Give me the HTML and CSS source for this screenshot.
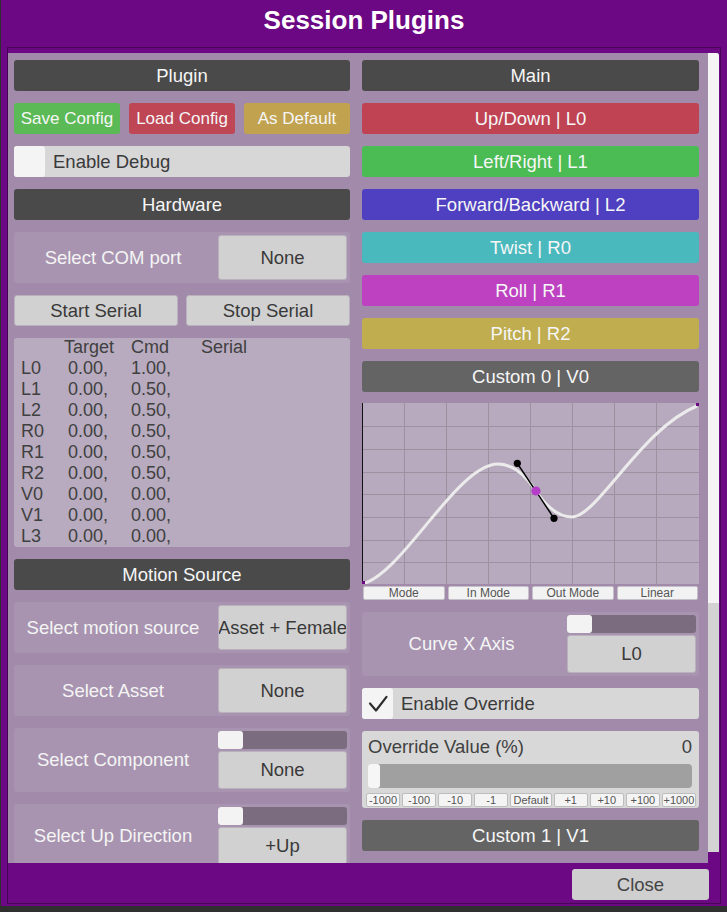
FILE: index.html
```html
<!DOCTYPE html>
<html>
<head>
<meta charset="utf-8">
<title>Session Plugins</title>
<link rel="stylesheet" href="styles.css">
</head>
<body>
<div class="window">
  <div class="title">Session Plugins</div>
  <div class="frame">
    <div class="view">
      <div class="scroll">
        <div class="col left">
          <div class="hdr">Plugin</div>
          <div class="btnrow">
            <div class="cbtn green">Save Config</div>
            <div class="cbtn red">Load Config</div>
            <div class="cbtn gold">As Default</div>
          </div>
          <div class="toggle"><span class="box"></span><span class="tlabel">Enable Debug</span></div>
          <div class="hdr">Hardware</div>
          <div class="row">
            <div class="lbl">Select COM port</div>
            <div class="ctl"><div class="gbtn">None</div></div>
          </div>
          <div class="btnrow two">
            <div class="gbtn">Start Serial</div>
            <div class="gbtn">Stop Serial</div>
          </div>
          <div class="data">
            <div class="grid">
              <span></span><span class="shift">Target</span><span>Cmd</span><span>Serial</span>
              <span>L0</span><span>0.00,</span><span>1.00,</span><span></span>
              <span>L1</span><span>0.00,</span><span>0.50,</span><span></span>
              <span>L2</span><span>0.00,</span><span>0.50,</span><span></span>
              <span>R0</span><span>0.00,</span><span>0.50,</span><span></span>
              <span>R1</span><span>0.00,</span><span>0.50,</span><span></span>
              <span>R2</span><span>0.00,</span><span>0.50,</span><span></span>
              <span>V0</span><span>0.00,</span><span>0.00,</span><span></span>
              <span>V1</span><span>0.00,</span><span>0.00,</span><span></span>
              <span>L3</span><span>0.00,</span><span>0.00,</span><span></span>
            </div>
          </div>
          <div class="hdr">Motion Source</div>
          <div class="row">
            <div class="lbl">Select motion source</div>
            <div class="ctl"><div class="gbtn clip"><span>Asset + Female</span></div></div>
          </div>
          <div class="row">
            <div class="lbl">Select Asset</div>
            <div class="ctl"><div class="gbtn">None</div></div>
          </div>
          <div class="row tall">
            <div class="lbl">Select Component</div>
            <div class="ctl">
              <div class="slider"><div class="thumb"></div></div>
              <div class="gbtn">None</div>
            </div>
          </div>
          <div class="row tall">
            <div class="lbl">Select Up Direction</div>
            <div class="ctl">
              <div class="slider"><div class="thumb"></div></div>
              <div class="gbtn">+Up</div>
            </div>
          </div>
        </div>

        <div class="col right">
          <div class="hdr">Main</div>
          <div class="axis red">Up/Down | L0</div>
          <div class="axis green2">Left/Right | L1</div>
          <div class="axis blue">Forward/Backward | L2</div>
          <div class="axis teal">Twist | R0</div>
          <div class="axis magenta">Roll | R1</div>
          <div class="axis gold2">Pitch | R2</div>
          <div class="axis grey">Custom 0 | V0</div>
          <div class="graph">
            <div class="plot">
              <svg width="337" height="181" viewBox="0 0 337 181">
                <g stroke="#9d919f" stroke-width="1">
                  <line x1="42.5" y1="0" x2="42.5" y2="181"/>
                  <line x1="84.5" y1="0" x2="84.5" y2="181"/>
                  <line x1="126.5" y1="0" x2="126.5" y2="181"/>
                  <line x1="168.5" y1="0" x2="168.5" y2="181"/>
                  <line x1="210.5" y1="0" x2="210.5" y2="181"/>
                  <line x1="252.5" y1="0" x2="252.5" y2="181"/>
                  <line x1="294.5" y1="0" x2="294.5" y2="181"/>
                  <line x1="0" y1="23.5" x2="337" y2="23.5"/>
                  <line x1="0" y1="46.5" x2="337" y2="46.5"/>
                  <line x1="0" y1="69.5" x2="337" y2="69.5"/>
                  <line x1="0" y1="91.5" x2="337" y2="91.5"/>
                  <line x1="0" y1="114.5" x2="337" y2="114.5"/>
                  <line x1="0" y1="137.5" x2="337" y2="137.5"/>
                  <line x1="0" y1="159.5" x2="337" y2="159.5"/>
                </g>
                <line x1="0.5" y1="0" x2="0.5" y2="181" stroke="#111" stroke-width="1"/>
                <path d="M0,181 C40,172 95,61 136,61 C150,61 162,70 174,88 C186,106 197,114 210,114 C235,114 280,25 335,3" fill="none" stroke="#ebebeb" stroke-width="3"/>
                <line x1="155.3" y1="60.3" x2="192" y2="115.3" stroke="#000" stroke-width="1.5"/>
                <circle cx="155.3" cy="60.3" r="3.6" fill="#000"/>
                <circle cx="192" cy="115.3" r="3.6" fill="#000"/>
                <circle cx="174" cy="88" r="4.6" fill="#b43ec8"/>
                <rect x="0" y="178" width="3" height="3" fill="#6c0883"/>
                <rect x="334" y="0" width="3" height="3" fill="#6c0883"/>
              </svg>
            </div>
            <div class="gbtns">
              <div class="gb">Mode</div>
              <div class="gb">In Mode</div>
              <div class="gb">Out Mode</div>
              <div class="gb">Linear</div>
            </div>
          </div>
          <div class="row tall">
            <div class="lbl">Curve X Axis</div>
            <div class="ctl">
              <div class="slider"><div class="thumb"></div></div>
              <div class="gbtn">L0</div>
            </div>
          </div>
          <div class="toggle">
            <span class="box">
              <svg width="31" height="31" viewBox="0 0 31 31"><polyline points="8,15.5 14,22.5 24.5,8.8" fill="none" stroke="#2c2c2c" stroke-width="2.2" stroke-linecap="round" stroke-linejoin="round"/></svg>
            </span>
            <span class="tlabel">Enable Override</span>
          </div>
          <div class="ovr">
            <div class="ovr-top"><span>Override Value (%)</span><span>0</span></div>
            <div class="otrack"><div class="othumb"></div></div>
            <div class="obtns">
              <div class="ob">-1000</div>
              <div class="ob">-100</div>
              <div class="ob">-10</div>
              <div class="ob">-1</div>
              <div class="ob wide">Default</div>
              <div class="ob">+1</div>
              <div class="ob">+10</div>
              <div class="ob">+100</div>
              <div class="ob">+1000</div>
            </div>
          </div>
          <div class="axis grey">Custom 1 | V1</div>
          <div class="axis grey"></div>
        </div>
      </div>
      <div class="scrollbar"><div class="sthumb"></div></div>
    </div>
    <div class="footer"><div class="close">Close</div></div>
  </div>
</div>
</body>
</html>
```

FILE: styles.css
```css
* { box-sizing: border-box; margin: 0; padding: 0; }
html, body { width: 727px; height: 912px; overflow: hidden; }
body {
  background: #2f2f2f;
  font-family: "Liberation Sans", Arial, sans-serif;
  font-size: 18.5px;
}
.window {
  width: 726px;
  height: 906px;
  margin-left: 1px;
  background: #6c0883;
  display: flex;
  flex-direction: column;
}
.title {
  height: 47px;
  line-height: 40px;
  text-align: center;
  color: #fff;
  font-weight: bold;
  font-size: 26px;
}
.frame {
  margin-left: 6px;
  width: 714px;
  height: 857px;
  border: 1px solid #440655;
  padding-top: 5px;
  display: flex;
  flex-direction: column;
}
.view {
  height: 810px;
  display: flex;
}
.scroll {
  width: 700px;
  height: 810px;
  overflow: hidden;
  background: #a18aaa;
  padding: 7px 9px 0 6px;
  display: flex;
  gap: 12px;
  align-items: flex-start;
}
.scrollbar {
  width: 11px;
  height: 799px;
  background: #d3d3d3;
  border-radius: 0 3px 0 0;
}
.sthumb {
  height: 550px;
  background: #f4f4f4;
  border-radius: 0 3px 0 0;
}
.footer {
  flex: 1;
  display: flex;
  justify-content: flex-end;
  padding: 6px 11px 0 0;
}
.close {
  width: 137px;
  height: 31px;
  background: #cfcfcf;
  border-radius: 3px;
  color: #444;
  display: flex;
  align-items: center;
  justify-content: center;
}

.col { display: flex; flex-direction: column; gap: 12px; }
.col.left { width: 336px; }
.col.right { width: 337px; }

.hdr, .axis {
  height: 31px;
  flex: none;
  border-radius: 3px;
  background: #4a4a4a;
  color: #f6f6f6;
  display: flex;
  align-items: center;
  justify-content: center;
}
.axis.red { background: #bf4353; }
.axis.green2 { background: #4bbb53; }
.axis.blue { background: #4e40c0; }
.axis.teal { background: #4ab9be; }
.axis.magenta { background: #bd41c0; }
.axis.gold2 { background: #bfad50; }
.axis.grey { background: #646464; }

.btnrow {
  height: 31px;
  flex: none;
  display: flex;
  justify-content: space-between;
}
.cbtn {
  width: 106px;
  border-radius: 3px;
  color: #f6f6f6;
  font-size: 17px;
  display: flex;
  align-items: center;
  justify-content: center;
}
.cbtn.green { background: #5cba56; }
.cbtn.red { background: #bf4655; }
.cbtn.gold { background: #c1a24f; }
.btnrow.two { gap: 8px; }
.btnrow.two .gbtn { flex: 1; }

.gbtn {
  background: #d1d1d1;
  border: 1px solid #b9b1bb;
  border-radius: 3px;
  color: #393939;
  flex: 1;
  display: flex;
  align-items: center;
  justify-content: center;
  white-space: nowrap;
}
.gbtn.clip { overflow: hidden; }

.toggle {
  height: 31px;
  flex: none;
  background: #d7d7d7;
  border-radius: 3px;
  display: flex;
  align-items: center;
  color: #3a3a3a;
}
.box {
  width: 31px;
  height: 31px;
  background: #f4f4f4;
  border-radius: 3px;
  margin-right: 8px;
  display: block;
}
.box svg { display: block; }

.row {
  height: 51px;
  flex: none;
  background: #a894b0;
  border-radius: 3px;
  padding: 3px;
  display: flex;
}
.row.tall { height: 64px; }
.lbl {
  flex: 1;
  display: flex;
  align-items: center;
  justify-content: center;
  color: #f4f4f4;
  padding-right: 9px;
  white-space: nowrap;
}
.ctl {
  width: 129px;
  display: flex;
  flex-direction: column;
  gap: 2px;
}
.slider {
  height: 18px;
  flex: none;
  background: #7c6c80;
  border-radius: 3px;
}
.thumb {
  width: 25px;
  height: 18px;
  background: #f3f3f3;
  border-radius: 3px;
}

.data {
  height: 209px;
  flex: none;
  background: #b8abbf;
  border-radius: 3px;
  padding-left: 7px;
  color: #404040;
  font-size: 18px;
}
.grid {
  display: grid;
  grid-template-columns: 47px 63px 70px 1fr;
  line-height: 21px;
  margin-top: -1px;
}
.shift { margin-left: -4px; }

.graph {
  height: 197px;
  flex: none;
  margin-top: -1px;
  display: flex;
  flex-direction: column;
}
.plot {
  height: 181px;
  background: #b8aabe;
}
.plot svg { display: block; }
.gbtns {
  height: 14px;
  margin-top: 2px;
  padding: 0 1px;
  display: flex;
  gap: 3px;
}
.gb {
  flex: 1;
  background: #f2f2f2;
  border: 1px solid #c6c0c8;
  border-radius: 2px;
  color: #555;
  font-size: 12px;
  display: flex;
  align-items: center;
  justify-content: center;
}

.ovr {
  height: 77px;
  flex: none;
  background: #d8d8d8;
  border-radius: 3px;
  padding-top: 5px;
}
.ovr-top {
  display: flex;
  justify-content: space-between;
  padding: 0 7px 0 6px;
  line-height: 22px;
  color: #404040;
}
.otrack {
  height: 24px;
  margin: 6px 7px 0 6px;
  background: #a0a0a0;
  border-radius: 4px;
}
.othumb {
  width: 12px;
  height: 24px;
  background: #f6f6f6;
  border-radius: 3px;
}
.obtns {
  height: 14px;
  margin: 5px 3px 0 4px;
  display: flex;
  gap: 2px;
}
.ob {
  flex: 1;
  background: #f4f4f4;
  border: 1px solid #bdbdbd;
  border-radius: 2px;
  color: #555;
  font-size: 11px;
  display: flex;
  align-items: center;
  justify-content: center;
}
.ob.wide { flex: 1.23; }
```
